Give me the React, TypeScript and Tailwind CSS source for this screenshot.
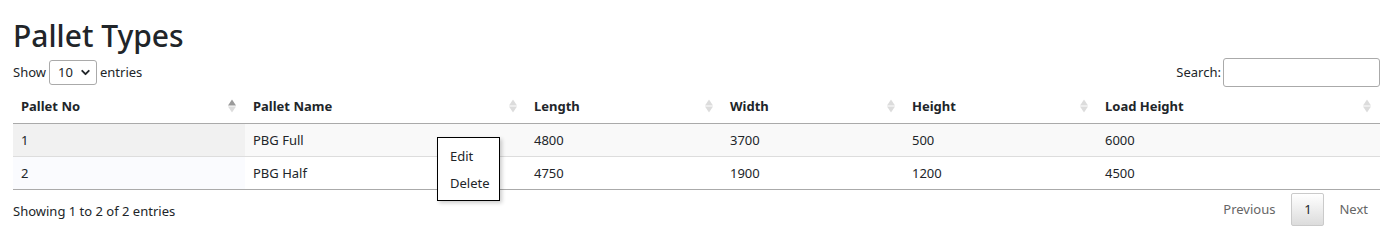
import { ChevronDown } from "lucide-react";

type Row = { no: string; name: string; length: string; width: string; height: string; load: string };

const rows: Row[] = [
  { no: "1", name: "PBG Full", length: "4800", width: "3700", height: "500", load: "6000" },
  { no: "2", name: "PBG Half", length: "4750", width: "1900", height: "1200", load: "4500" },
];

const columns = [
  { label: "Pallet No", width: "w-[232px]", active: true },
  { label: "Pallet Name", width: "w-[281px]" },
  { label: "Length", width: "w-[196px]" },
  { label: "Width", width: "w-[182px]" },
  { label: "Height", width: "w-[193px]" },
  { label: "Load Height", width: "w-[283px]" },
];

function SortIcon({ active }: { active?: boolean }) {
  return (
    <span className="absolute right-[9px] top-1/2 flex -translate-y-1/2 flex-col gap-[1px]">
      <span
        className={`h-0 w-0 border-x-[4px] border-b-[6px] border-x-transparent ${active ? "border-b-[#9a9a9a]" : "border-b-[#dcdcdc]"}`}
      />
      <span className="h-0 w-0 border-x-[4px] border-t-[6px] border-x-transparent border-t-[#dcdcdc]" />
    </span>
  );
}

export default function App() {
  return (
    <div className="relative h-[234px] w-[1396px] overflow-hidden bg-white pl-[13px] pr-[16px] font-['Segoe_UI','Noto_Sans',sans-serif] text-[13px] text-[#212529]">
      <h1 className="pt-[14px] text-[30px] font-medium leading-[44px]">Pallet Types</h1>

      <div className="flex items-end justify-between">
        <div className="flex items-center gap-[3px] pb-[2px]">
          <span>Show</span>
          <div className="flex h-[25px] w-[48px] items-center justify-between rounded-[3px] border border-[#aaa] pl-[8px] pr-[4px]">
            <span>10</span>
            <ChevronDown className="h-[13px] w-[13px]" strokeWidth={3.5} />
          </div>
          <span>entries</span>
        </div>
        <div className="flex items-center gap-[2px]">
          <span>Search:</span>
          <div className="h-[29px] w-[157px] rounded-[3px] border border-[#aaa]" />
        </div>
      </div>

      <table className="mt-[2px] w-[1367px] table-fixed border-collapse">
        <thead>
          <tr className="border-b border-[#aaa]">
            {columns.map((c) => (
              <th key={c.label} className={`relative ${c.width} px-[8px] py-[7px] text-left text-[13px] font-bold leading-[20px]`}>
                {c.label}
                <SortIcon active={c.active} />
              </th>
            ))}
          </tr>
        </thead>
        <tbody>
          {rows.map((r, i) => (
            <tr key={r.no} className={`${i === 0 ? "bg-[#f9f9f9] border-b border-[#ddd]" : "bg-white border-b border-[#aaa]"}`}>
              <td className={`h-[33px] px-[8px] pt-[2px] ${i === 0 ? "bg-[#f1f1f1]" : "bg-[#fafbfe]"}`}>{r.no}</td>
              <td className="px-[8px] pt-[2px]">{r.name}</td>
              <td className="px-[8px] pt-[2px]">{r.length}</td>
              <td className="px-[8px] pt-[2px]">{r.width}</td>
              <td className="px-[8px] pt-[2px]">{r.height}</td>
              <td className="px-[8px] pt-[2px]">{r.load}</td>
            </tr>
          ))}
        </tbody>
      </table>

      <div className="flex items-center justify-between pt-[3px]">
        <span className="pt-[4px]">Showing 1 to 2 of 2 entries</span>
        <div className="flex items-center pr-[12px]">
          <span className="pl-[14px] pr-[16px] text-[#666]">Previous</span>
          <span className="flex h-[33px] w-[33px] items-center justify-center rounded-[2px] border border-[#cacaca] bg-gradient-to-b from-white to-[#dcdcdc]">
            1
          </span>
          <span className="pl-[15px] text-[#666]">Next</span>
        </div>
      </div>

      <div className="absolute left-[437px] top-[137px] flex h-[64px] w-[63px] flex-col gap-[7px] border border-black bg-white px-[12px] pt-[9px] shadow-[2px_2px_4px_rgba(0,0,0,0.2)]">
        <span>Edit</span>
        <span>Delete</span>
      </div>
    </div>
  );
}
